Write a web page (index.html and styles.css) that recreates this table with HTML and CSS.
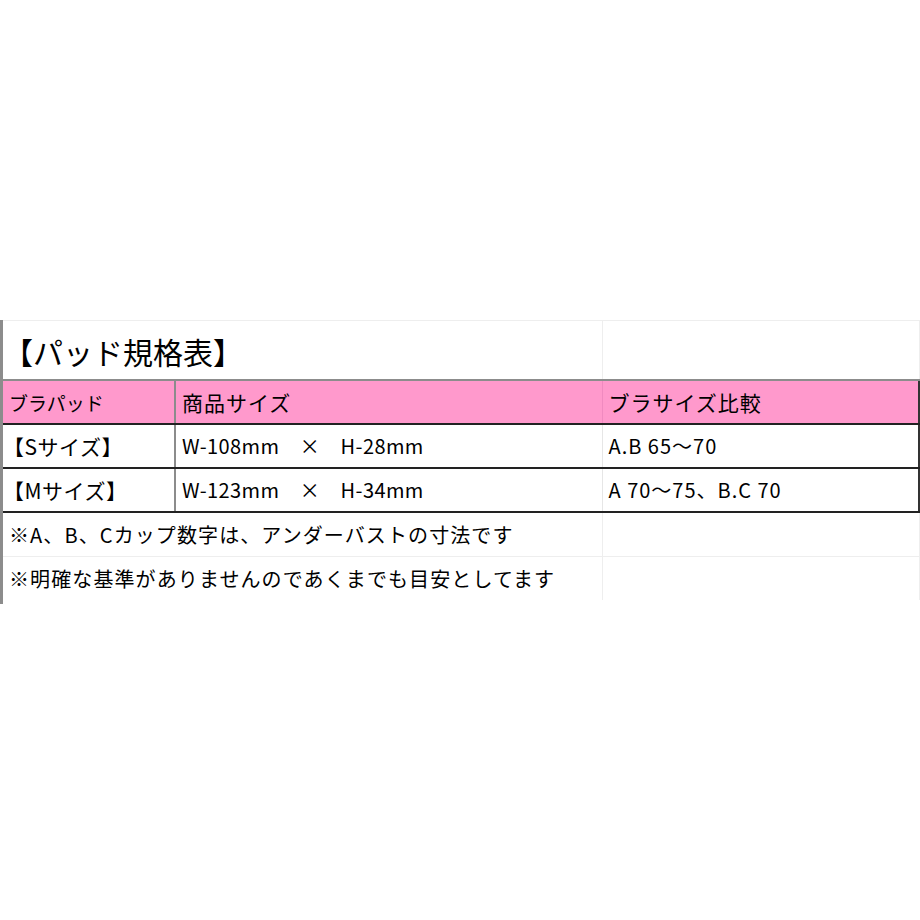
FILE: index.html
```html
<!DOCTYPE html>
<html lang="ja">
<head>
<meta charset="utf-8">
<link rel="stylesheet" href="styles.css">
</head>
<body>
<div class="sheet">
  <table class="spec">
    <colgroup>
      <col class="c1"><col class="c2"><col class="c3">
    </colgroup>
    <tr class="title-row">
      <td colspan="2" class="title">【パッド規格表】</td>
      <td class="blank"></td>
    </tr>
    <tr class="head">
      <td class="first">ブラパッド</td>
      <td class="mid">商品サイズ</td>
      <td class="last">ブラサイズ比較</td>
    </tr>
    <tr class="data">
      <td class="first">【Sサイズ】</td>
      <td class="mid">W-108mm　×　H-28mm</td>
      <td class="last">A.B 65～70</td>
    </tr>
    <tr class="data">
      <td class="first">【Mサイズ】</td>
      <td class="mid">W-123mm　×　H-34mm</td>
      <td class="last">A 70～75、B.C 70</td>
    </tr>
    <tr class="note">
      <td colspan="2">※A、B、Cカップ数字は、アンダーバストの寸法です</td>
      <td class="blank"></td>
    </tr>
    <tr class="note">
      <td colspan="2">※明確な基準がありませんのであくまでも目安としてます</td>
      <td class="blank"></td>
    </tr>
  </table>
</div>
</body>
</html>
```
FILE: styles.css
```css
html, body {
  margin: 0;
  padding: 0;
  background: #ffffff;
}
body {
  font-family: "Noto Sans CJK JP", "Liberation Sans", sans-serif;
  color: #000000;
}
.sheet {
  margin-top: 320px;
  width: 920px;
  border-left: 3px solid #8c8c8c;
  box-sizing: border-box;
  height: 284px;
}
.spec {
  border-collapse: collapse;
  table-layout: fixed;
  width: 916px;
}
.c1 { width: 172px; }
.c2 { width: 427px; }
.c3 { width: 317px; }
.spec td {
  padding: 0 0 0 6px;
  white-space: nowrap;
  overflow: visible;
  font-size: 19px;
  letter-spacing: 0.5px;
  line-height: 1;
}
.title-row td {
  height: 57px;
  border-top: 1px solid #eeeeee;
  border-right: 1px solid #eeeeee;
  border-bottom: 2px solid #8c8c8c;
}
.title {
  font-size: 30px !important;
  padding-left: 0 !important;
  padding-top: 1px !important;
  letter-spacing: 0 !important;
}
.head td {
  height: 42px;
  background: #ff99cc;
  border-bottom: 2px solid #222222;
  font-size: 21px;
  letter-spacing: 1px;
}
.head .first { border-right: 2px solid #8c8c8c; font-size: 19px; letter-spacing: 0; }
.head .mid { border-right: 1px solid #f08ac0; }
.head .last { border-right: 2px solid #333333; }
.data td {
  height: 42px;
  border-bottom: 2px solid #222222;
  font-size: 20px;
  letter-spacing: 1px;
}
.data .first {
  font-size: 21px;
  padding-left: 0;
  letter-spacing: 0.5px;
  border-right: 2px solid #8c8c8c;
}
.data .mid { border-right: 1px solid #e6e6e6; letter-spacing: 0.4px; }
.data .last { border-right: 2px solid #333333; }
.note td {
  height: 43px;
  border-bottom: 1px solid #eeeeee;
  font-size: 20px;
  letter-spacing: 1.1px;
}
.note .blank, .title-row .blank {
  border-left: 1px solid #eeeeee;
  border-right: 1px solid #eeeeee;
}
.note:last-child td { border-bottom: none; }
```
